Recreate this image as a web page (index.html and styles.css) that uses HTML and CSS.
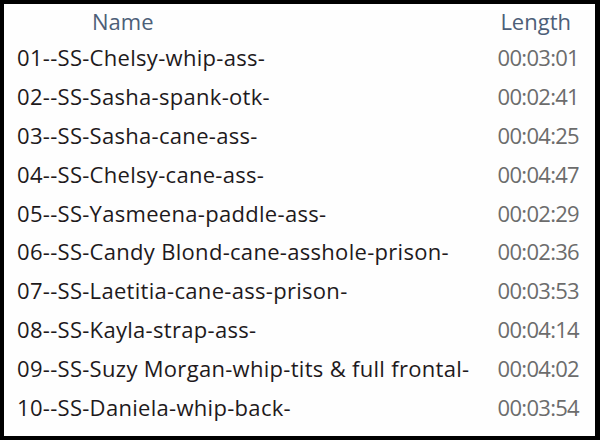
FILE: index.html
```html
<!DOCTYPE html>
<html>
<head>
<meta charset="utf-8">
<link rel="stylesheet" href="styles.css">
</head>
<body>
<div class="frame">
  <div class="header">
    <div class="h-name">Name</div>
    <div class="h-len">Length</div>
  </div>
  <div class="list">
    <div class="row"><span class="name">01--SS-Chelsy-whip-ass-</span><span class="len">00:03:01</span></div>
    <div class="row"><span class="name">02--SS-Sasha-spank-otk-</span><span class="len">00:02:41</span></div>
    <div class="row"><span class="name">03--SS-Sasha-cane-ass-</span><span class="len">00:04:25</span></div>
    <div class="row"><span class="name">04--SS-Chelsy-cane-ass-</span><span class="len">00:04:47</span></div>
    <div class="row"><span class="name">05--SS-Yasmeena-paddle-ass-</span><span class="len">00:02:29</span></div>
    <div class="row"><span class="name">06--SS-Candy Blond-cane-asshole-prison-</span><span class="len">00:02:36</span></div>
    <div class="row"><span class="name">07--SS-Laetitia-cane-ass-prison-</span><span class="len">00:03:53</span></div>
    <div class="row"><span class="name">08--SS-Kayla-strap-ass-</span><span class="len">00:04:14</span></div>
    <div class="row"><span class="name">09--SS-Suzy Morgan-whip-tits &amp; full frontal-</span><span class="len">00:04:02</span></div>
    <div class="row"><span class="name">10--SS-Daniela-whip-back-</span><span class="len">00:03:54</span></div>
  </div>
</div>
</body>
</html>
```
FILE: styles.css
```css
html, body {
  margin: 0;
  padding: 0;
  background: #000;
}
.frame {
  width: 591px;
  height: 432px;
  margin: 4px 5px 4px 4px;
  background: #fefefe;
  font-family: "Open Sans", "Noto Sans", sans-serif;
  font-size: 22px;
  overflow: hidden;
}
.header {
  height: 34px;
  display: flex;
  align-items: center;
  color: #4d5f78;
}
.h-name {
  padding-left: 88px;
  flex: 1;
}
.h-len {
  padding-right: 24px;
}
.row {
  height: 38.8px;
  display: flex;
  align-items: center;
  justify-content: space-between;
  padding: 0 16px 0 13px;
}
.name {
  color: #1e1a1c;
  letter-spacing: 0.3px;
}
.len {
  color: #6c6c6c;
  letter-spacing: -0.7px;
}
```
